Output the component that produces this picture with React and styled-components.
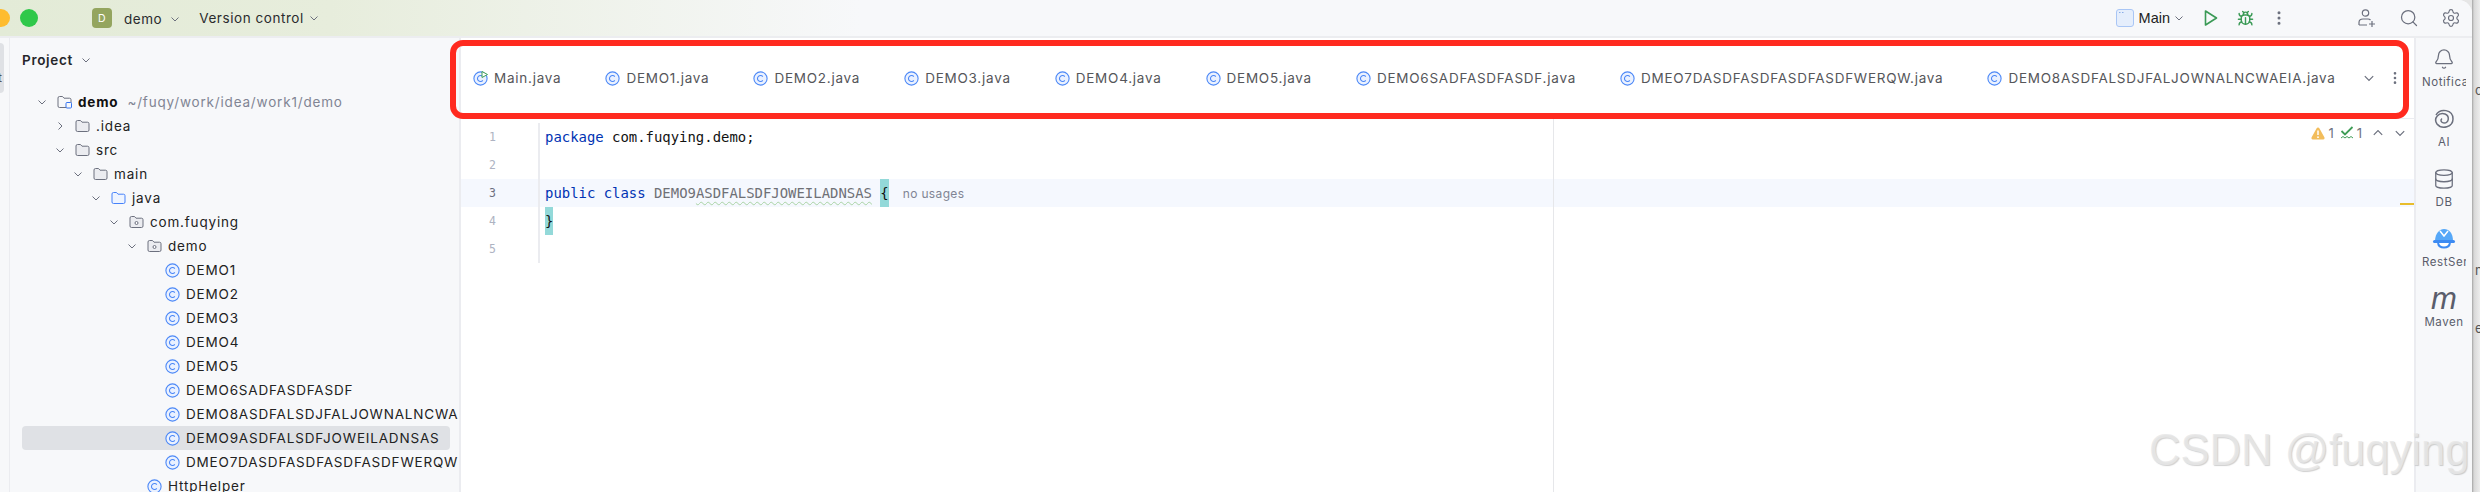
import React from 'react';
import styled, { createGlobalStyle } from 'styled-components';
import { Bell, Database, Search, Settings, Bug, EllipsisVertical } from 'lucide-react';

const Global = createGlobalStyle`
    html, body {
        margin: 0;
        padding: 0;
        background: #e6e6e6;
    }
    * {
        box-sizing: border-box;
    }
`;

const UI = `Inter, "Noto Sans", sans-serif`;
const MONO = `"DejaVu Sans Mono", "Liberation Mono", monospace`;

const Page = styled.div`
    position: relative;
    display: flex;
    width: 2480px;
    height: 492px;
    overflow: hidden;
    font-family: ${UI};
`;

const Window = styled.div`
    display: flex;
    flex-direction: column;
    width: 2472px;
    height: 492px;
    background: #f7f8fa;
    border-top-right-radius: 14px;
    overflow: hidden;
`;

const Backdrop = styled.div`
    display: flex;
    flex-direction: column;
    width: 8px;
    overflow: hidden;
    background: linear-gradient(90deg, #a4a4a4 0, #d8d8d8 2px, #ededed 8px);
    font-size: 13px;
    color: #555;
`;

const BackdropGlyph = styled.span`
    margin-top: ${p => p.$gap}px;
    margin-left: 3px;
    line-height: 16px;
`;

const TitleBar = styled.div`
    display: flex;
    align-items: center;
    height: 38px;
    flex-shrink: 0;
    background: linear-gradient(90deg, #e3ebd7 0, #e7eddc 330px, #f7f8fa 860px);
    border-bottom: 2px solid #ecedf0;
    color: #2a2b2e;
    font-size: 13.5px;
    letter-spacing: 0.55px;
`;

const Light = styled.span`
    width: 18px;
    height: 18px;
    border-radius: 50%;
    background: ${p => p.$color};
    flex-shrink: 0;
`;

const Lights = styled.div`
    display: flex;
    gap: 10px;
    margin-left: -8px;
`;

const Badge = styled.span`
    display: flex;
    align-items: center;
    justify-content: center;
    width: 20px;
    height: 20px;
    margin-left: 54px;
    border-radius: 4px;
    background: #94a55f;
    color: #fff;
    font-size: 10.5px;
`;

const MenuLabel = styled.span`
    display: inline-flex;
    align-items: center;
    gap: ${p => p.$gap || 5}px;
    margin-left: ${p => p.$left}px;
    margin-top: ${p => p.$top || 0}px;
`;

const TitleRight = styled.div`
    display: flex;
    align-items: center;
    margin-left: auto;
    height: 100%;
`;

const RunLabel = styled.span`
    margin-left: 5px;
    font-family: "Liberation Sans", sans-serif;
    font-size: 14.5px;
    letter-spacing: 0;
    color: #222;
`;

const ToolSlot = styled.span`
    display: flex;
    align-items: center;
    justify-content: center;
    width: ${p => p.$w || 34}px;
    height: 100%;
    margin-left: ${p => p.$left || 0}px;
    color: #6c707e;
`;

const Main = styled.div`
    display: flex;
    flex: 1;
    min-height: 0;
`;

const LeftStrip = styled.div`
    width: 10px;
    flex-shrink: 0;
    padding-top: 5px;
    border-right: 1px solid #ebecf0;
    overflow: hidden;
`;

const StripButton = styled.div`
    width: 4px;
    height: 50px;
    background: #dfe1e5;
    border-radius: 0 5px 5px 0;
    overflow: hidden;
    padding-top: 28px;
    font-size: 12px;
    line-height: 14px;
    color: #555;
    text-indent: -2px;
`;

const ProjectPanel = styled.div`
    width: 449px;
    flex-shrink: 0;
    overflow: hidden;
`;

const PanelHeader = styled.div`
    display: flex;
    align-items: center;
    gap: 8px;
    height: 44px;
    padding-left: 12px;
    font-size: 13.5px;
    font-weight: 600;
    letter-spacing: 0.7px;
    color: #25262a;
`;

const Tree = styled.div`
    margin: 7px 0 0 12px;
    padding-top: 1px;
    width: 428px;
`;

const Row = styled.div`
    display: flex;
    align-items: center;
    height: 24px;
    padding-left: ${p => 11 + 18 * p.$level}px;
    border-radius: 4px;
    background: ${p => (p.$selected ? '#dfe1e5' : 'transparent')};
    white-space: nowrap;
    font-size: 13.5px;
    letter-spacing: 0.82px;
    color: #222;
`;

const ChevronSlot = styled.span`
    display: flex;
    align-items: center;
    justify-content: center;
    width: 18px;
    margin-right: 6px;
    flex-shrink: 0;
`;

const RowIcon = styled.span`
    display: flex;
    width: 15px;
    margin-right: 6px;
    flex-shrink: 0;
`;

const RootName = styled.span`
    font-weight: 700;
    color: #111;
`;

const RootPath = styled.span`
    margin-left: 9px;
    color: #818594;
`;

const Editor = styled.div`
    position: relative;
    display: flex;
    flex-direction: column;
    flex: 1;
    min-width: 0;
    background: #fff;
    border-left: 2px solid #ebecf0;
`;

const TabBar = styled.div`
    display: flex;
    align-items: center;
    height: 81px;
    flex-shrink: 0;
    padding: 0 11px 0 12px;
    background: #fff;
    border-bottom: 1px solid #ebecf0;
`;

const Tabs = styled.div`
    display: flex;
    align-items: center;
    gap: 44px;
    flex: 1;
    min-width: 0;
`;

const Tab = styled.div`
    display: flex;
    align-items: center;
    gap: 6px;
    white-space: nowrap;
    font-size: 13.5px;
    letter-spacing: 0.75px;
    color: #55565a;
`;

const TabActions = styled.div`
    display: flex;
    align-items: center;
    gap: 12px;
    flex-shrink: 0;
    color: #6c707e;
`;

const Annotation = styled.div`
    position: absolute;
    left: -11px;
    top: 2px;
    width: 1959px;
    height: 79px;
    border: 6px solid #ff2a1f;
    border-radius: 13px;
    pointer-events: none;
`;

const CodeArea = styled.div`
    position: relative;
    flex: 1;
    padding-top: 4px;
    min-height: 0;
`;

const InspectionBar = styled.div`
    position: absolute;
    top: 2px;
    right: 8px;
    display: flex;
    align-items: center;
    height: 24px;
    gap: 6px;
    font-size: 13px;
    color: #6c707e;
`;

const InspectionCount = styled.span`
    display: flex;
    align-items: center;
    gap: 3px;
`;

const InspectionNav = styled.span`
    display: flex;
    align-items: center;
    gap: 10px;
    margin-left: 4px;
`;

const CodeLine = styled.div`
    display: flex;
    height: 28px;
    background: ${p => (p.$active ? '#f5f8fe' : 'transparent')};
`;

const LineNumber = styled.div`
    width: 79px;
    flex-shrink: 0;
    padding-right: 42px;
    border-right: 2px solid #ebecf0;
    text-align: right;
    font-family: ${MONO};
    font-size: 11.5px;
    line-height: 28px;
    color: ${p => (p.$active ? '#6c707e' : '#aeb3c2')};
`;

const CodeText = styled.div`
    padding-left: 5px;
    font-family: ${MONO};
    font-size: 13.93px;
    line-height: 28px;
    color: #111;
    white-space: pre;
`;

const Keyword = styled.span`
    color: #0033b3;
`;

const Unused = styled.span`
    color: #6f7076;
`;

const Squiggle = styled.span`
    color: #6f7076;
    text-decoration: underline wavy #a9d3a4 1px;
    text-underline-offset: 3px;
`;

const Brace = styled.span`
    display: inline-block;
    height: 28px;
    background: #93d9d9;
`;

const Hint = styled.span`
    margin-left: 14px;
    font-family: ${UI};
    font-size: 12px;
    letter-spacing: 0.35px;
    color: #818594;
`;

const MarginLine = styled.div`
    position: absolute;
    top: 0;
    bottom: 0;
    left: 1092px;
    width: 1px;
    background: #e6e7ea;
`;

const ErrorStripe = styled.div`
    position: absolute;
    top: 84px;
    right: 0;
    width: 14px;
    height: 2px;
    background: #e8bd2c;
`;

const RightStrip = styled.div`
    display: flex;
    flex-direction: column;
    align-items: center;
    width: 58px;
    flex-shrink: 0;
    padding-top: 8px;
    border-left: 2px solid #ebecf0;
`;

const StripItem = styled.div`
    display: flex;
    flex-direction: column;
    align-items: center;
    width: 44px;
    height: 60px;
    overflow: hidden;
`;

const StripIcon = styled.div`
    display: flex;
    align-items: center;
    justify-content: center;
    height: 26px;
    color: #6c707e;
`;

const StripLabel = styled.div`
    width: 44px;
    margin-top: 2px;
    overflow: hidden;
    text-align: center;
    white-space: nowrap;
    font-size: 11.5px;
    line-height: 16px;
    letter-spacing: 0.55px;
    color: #5a5d6b;
`;

const MavenMark = styled.span`
    font-family: "Liberation Sans", sans-serif;
    font-style: italic;
    font-size: 31px;
    line-height: 26px;
    color: #5a5d6b;
`;

const Watermark = styled.div`
    position: absolute;
    left: 2149px;
    top: 424px;
    font-family: "Liberation Sans", sans-serif;
    font-size: 43.6px;
    line-height: 52px;
    white-space: nowrap;
    color: rgba(232, 232, 232, 0.85);
    text-shadow: 1px 1px 1px rgba(120, 120, 120, 0.35);
`;

const Chevron = ({ dir = 'down', size = 10, color = '#6c707e' }) => {
    const d = {
        down: 'M1.5 3.5 L5 7 L8.5 3.5',
        right: 'M3.5 1.5 L7 5 L3.5 8.5',
        up: 'M1.5 6.5 L5 3 L8.5 6.5',
    }[dir];
    return (
        <svg width={size} height={size} viewBox="0 0 10 10" fill="none">
            <path d={d} stroke={color} strokeWidth="1" />
        </svg>
    );
};

const FolderIcon = ({ kind }) => {
    const blue = kind === 'source';
    const stroke = blue ? '#4682fa' : '#6c707e';
    const fill = blue ? '#eef4ff' : '#ebecf0';
    return (
        <svg width="15" height="14" viewBox="0 0 15 14" fill="none">
            <path
                d="M1 3 Q1 1.5 2.5 1.5 H5.5 L7 3.2 H12.5 Q14 3.2 14 4.7 V11 Q14 12.5 12.5 12.5 H2.5 Q1 12.5 1 11 Z"
                fill={kind === 'module' ? 'none' : fill}
                stroke={stroke}
            />
            {kind === 'package' && <circle cx="7.5" cy="8" r="1.5" stroke={stroke} fill="#fff" />}
            {kind === 'module' && (
                <rect x="9" y="7.5" width="5.5" height="5.5" rx="1" fill="#f7f8fa" stroke="#3574f0" />
            )}
        </svg>
    );
};

const ClassIcon = ({ run }) => (
    <svg width="15" height="15" viewBox="0 0 15 15" fill="none">
        <circle cx="7.5" cy="7.5" r="6.6" fill="#eaf1ff" stroke="#4c88f7" strokeWidth="1.1" />
        <path d="M9.8 5.6 A3 3 0 1 0 9.8 9.4" stroke="#4c88f7" strokeWidth="1.1" />
        {run && <path d="M9 0.5 L14.5 3.5 L9 6.5 Z" fill="#fff" stroke="#3f9d57" strokeWidth="1" />}
    </svg>
);

const PlayIcon = () => (
    <svg width="16" height="18" viewBox="0 0 16 18" fill="none">
        <path d="M2.5 2 L13.5 9 L2.5 16 Z" stroke="#3b9a56" strokeWidth="1.6" strokeLinejoin="round" />
    </svg>
);

const RunConfigIcon = () => (
    <svg width="18" height="18" viewBox="0 0 18 18" fill="none">
        <rect x="0.5" y="0.5" width="17" height="17" rx="2.5" fill="#e5eefc" stroke="#a9c6f5" />
        <path d="M3 3.5 H4.5 M6 3.5 H7.5" stroke="#8aaee8" />
    </svg>
);

const UserPlusIcon = () => (
    <svg width="20" height="20" viewBox="0 0 20 20" fill="none" stroke="#6c707e" strokeWidth="1.2">
        <circle cx="8.5" cy="5" r="3.2" />
        <path d="M2 17 V14.5 Q2 11 6 11 H11 Q12.5 11 13.5 12 M2 17 H10" />
        <path d="M15 13 V19 M12 16 H18" />
    </svg>
);

const WarningIcon = () => (
    <svg width="14" height="13" viewBox="0 0 14 13">
        <path d="M7 0.5 Q8 0.5 8.5 1.5 L13.5 10.5 Q14 12.5 12.3 12.5 H1.7 Q0 12.5 0.5 10.5 L5.5 1.5 Q6 0.5 7 0.5 Z" fill="#f2bd5c" />
        <path d="M7 3.5 V8" stroke="#fff" strokeWidth="1.5" />
        <circle cx="7" cy="10.2" r="0.9" fill="#fff" />
    </svg>
);

const TypoIcon = () => (
    <svg width="14" height="14" viewBox="0 0 14 14" fill="none" stroke="#3f9d57">
        <path d="M1.5 5 L5 8.5 L12.5 1" strokeWidth="1.8" />
        <path d="M1 12 L3 10.5 L5 12 L7 10.5 L9 12 L11 10.5 L13 12" strokeWidth="1" />
    </svg>
);

const SpiralIcon = () => (
    <svg width="24" height="24" viewBox="0 0 24 24" fill="none" stroke="#6c707e" strokeWidth="1.5">
        <path d="M4 8 C8 1 21 2 21 12 C21 20 10 23 5 17 C1 11 7 5 13 7 C18 9 17 16 12 16 C9 16 8 13 10 11.5" />
    </svg>
);

const HelmetIcon = () => (
    <svg width="24" height="22" viewBox="0 0 24 22">
        <path d="M3 13 C3 5 8 1 12 1 C17 1 21 5 21 13 Z" fill="#56a8f8" />
        <path d="M8 3 L12 8 L16 3" stroke="#fff" strokeWidth="1.5" fill="none" />
        <rect x="1" y="12" width="22" height="3" rx="1.5" fill="#3d8bf2" />
        <path d="M6 15 C7 21 17 21 18 15" stroke="#3d8bf2" strokeWidth="2" fill="#fff" />
    </svg>
);

const treeRows = [
    { level: 0, open: true, folder: 'module', root: true, name: 'demo' },
    { level: 1, closed: true, folder: 'plain', name: '.idea' },
    { level: 1, open: true, folder: 'plain', name: 'src' },
    { level: 2, open: true, folder: 'plain', name: 'main' },
    { level: 3, open: true, folder: 'source', name: 'java' },
    { level: 4, open: true, folder: 'package', name: 'com.fuqying' },
    { level: 5, open: true, folder: 'package', name: 'demo' },
    { level: 6, name: 'DEMO1' },
    { level: 6, name: 'DEMO2' },
    { level: 6, name: 'DEMO3' },
    { level: 6, name: 'DEMO4' },
    { level: 6, name: 'DEMO5' },
    { level: 6, name: 'DEMO6SADFASDFASDF' },
    { level: 6, name: 'DEMO8ASDFALSDJFALJOWNALNCWAEIA' },
    { level: 6, name: 'DEMO9ASDFALSDFJOWEILADNSAS', selected: true },
    { level: 6, name: 'DMEO7DASDFASDFASDFASDFWERQW' },
    { level: 5, name: 'HttpHelper' },
];

const tabs = [
    'DEMO1.java',
    'DEMO2.java',
    'DEMO3.java',
    'DEMO4.java',
    'DEMO5.java',
    'DEMO6SADFASDFASDF.java',
    'DMEO7DASDFASDFASDFASDFWERQW.java',
    'DEMO8ASDFALSDJFALJOWNALNCWAEIA.java',
];

const App = () => {
    return (
        <Page>
            <Global />
            <Window>
                <TitleBar>
                    <Lights>
                        <Light $color="#febc2e" />
                        <Light $color="#2fc84a" />
                    </Lights>
                    <Badge>D</Badge>
                    <MenuLabel $left={12} $top={2} $gap={8}>demo <Chevron /></MenuLabel>
                    <MenuLabel $left={19}>Version control <Chevron /></MenuLabel>
                    <TitleRight>
                        <RunConfigIcon />
                        <RunLabel>Main</RunLabel>
                        <ToolSlot $w={18}><Chevron /></ToolSlot>
                        <ToolSlot $left={6}><PlayIcon /></ToolSlot>
                        <ToolSlot><Bug size={17} color="#3b9a56" /></ToolSlot>
                        <ToolSlot><EllipsisVertical size={18} /></ToolSlot>
                        <ToolSlot $left={50} $w={42}><UserPlusIcon /></ToolSlot>
                        <ToolSlot $w={42}><Search size={20} strokeWidth={1.5} /></ToolSlot>
                        <ToolSlot $w={42}><Settings size={20} strokeWidth={1.4} /></ToolSlot>
                    </TitleRight>
                </TitleBar>
                <Main>
                    <LeftStrip>
                        <StripButton>t</StripButton>
                    </LeftStrip>
                    <ProjectPanel>
                        <PanelHeader>Project <Chevron /></PanelHeader>
                        <Tree>
                            {treeRows.map((row, i) => (
                                <Row key={i} $level={row.level} $selected={row.selected}>
                                    {row.folder ? (
                                        <ChevronSlot><Chevron dir={row.closed ? 'right' : 'down'} /></ChevronSlot>
                                    ) : (
                                        <ChevronSlot />
                                    )}
                                    <RowIcon>{row.folder ? <FolderIcon kind={row.folder} /> : <ClassIcon />}</RowIcon>
                                    {row.root ? (
                                        <>
                                            <RootName>{row.name}</RootName>
                                            <RootPath>~/fuqy/work/idea/work1/demo</RootPath>
                                        </>
                                    ) : (
                                        row.name
                                    )}
                                </Row>
                            ))}
                        </Tree>
                    </ProjectPanel>
                    <Editor>
                        <TabBar>
                            <Tabs>
                                <Tab><ClassIcon run />Main.java</Tab>
                                {tabs.map(name => (
                                    <Tab key={name}><ClassIcon />{name}</Tab>
                                ))}
                            </Tabs>
                            <TabActions>
                                <Chevron size={12} />
                                <EllipsisVertical size={16} />
                            </TabActions>
                        </TabBar>
                        <Annotation />
                        <CodeArea>
                            <MarginLine />
                            <CodeLine>
                                <LineNumber>1</LineNumber>
                                <CodeText><Keyword>package</Keyword> com.fuqying.demo;</CodeText>
                            </CodeLine>
                            <CodeLine>
                                <LineNumber>2</LineNumber>
                            </CodeLine>
                            <CodeLine $active>
                                <LineNumber $active>3</LineNumber>
                                <CodeText>
                                    <Keyword>public class</Keyword>{' '}
                                    <Unused>DEMO9</Unused><Squiggle>ASDFALSDFJOWEILADNSAS</Squiggle>{' '}
                                    <Brace>{'{'}</Brace>
                                    <Hint>no usages</Hint>
                                </CodeText>
                            </CodeLine>
                            <CodeLine>
                                <LineNumber>4</LineNumber>
                                <CodeText><Brace>{'}'}</Brace></CodeText>
                            </CodeLine>
                            <CodeLine>
                                <LineNumber>5</LineNumber>
                            </CodeLine>
                            <InspectionBar>
                                <InspectionCount><WarningIcon />1</InspectionCount>
                                <InspectionCount><TypoIcon />1</InspectionCount>
                                <InspectionNav>
                                    <Chevron dir="up" size={12} />
                                    <Chevron size={12} />
                                </InspectionNav>
                            </InspectionBar>
                            <ErrorStripe />
                        </CodeArea>
                    </Editor>
                    <RightStrip>
                        <StripItem>
                            <StripIcon><Bell size={22} strokeWidth={1.4} /></StripIcon>
                            <StripLabel>Notifications</StripLabel>
                        </StripItem>
                        <StripItem>
                            <StripIcon><SpiralIcon /></StripIcon>
                            <StripLabel>AI</StripLabel>
                        </StripItem>
                        <StripItem>
                            <StripIcon><Database size={22} strokeWidth={1.4} /></StripIcon>
                            <StripLabel>DB</StripLabel>
                        </StripItem>
                        <StripItem>
                            <StripIcon><HelmetIcon /></StripIcon>
                            <StripLabel>RestServices</StripLabel>
                        </StripItem>
                        <StripItem>
                            <StripIcon><MavenMark>m</MavenMark></StripIcon>
                            <StripLabel>Maven</StripLabel>
                        </StripItem>
                    </RightStrip>
                </Main>
            </Window>
            <Backdrop>
                <BackdropGlyph $gap={82}>c</BackdropGlyph>
                <BackdropGlyph $gap={164}>n</BackdropGlyph>
                <BackdropGlyph $gap={42}>e</BackdropGlyph>
            </Backdrop>
            <Watermark>CSDN @fuqying</Watermark>
        </Page>
    );
};

export default App;
